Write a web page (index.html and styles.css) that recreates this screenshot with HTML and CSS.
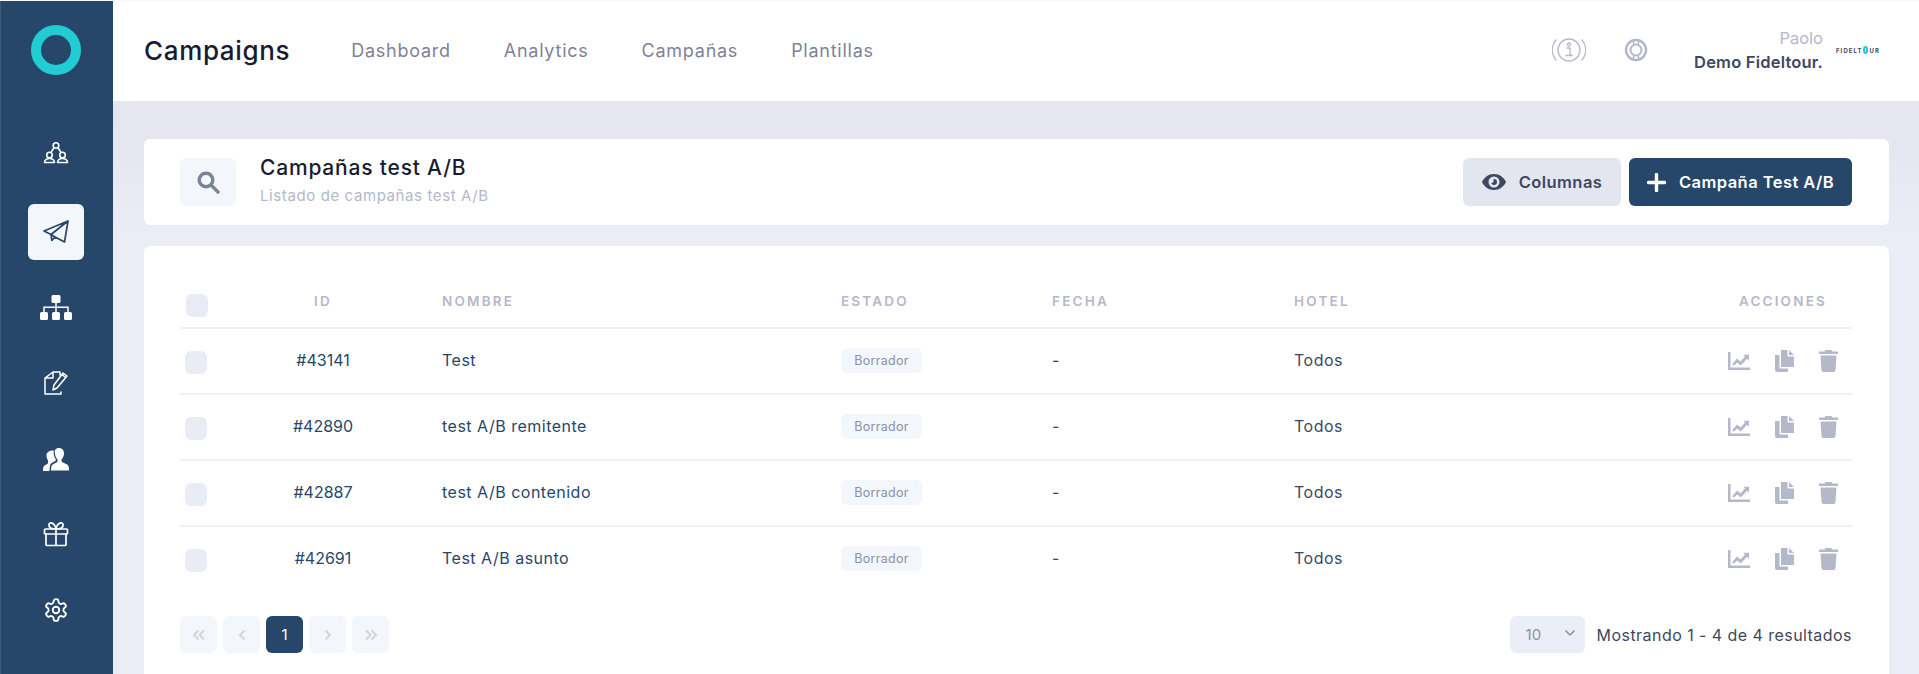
FILE: index.html
```html
<!DOCTYPE html>
<html lang="es">
<head>
<meta charset="utf-8">
<title>Campaigns</title>
<link rel="stylesheet" href="styles.css">
</head>
<body>
<div class="shell">
  <aside class="sidebar">
    <div class="logo"><svg width="50" height="50" viewBox="0 0 50 50"><circle cx="25" cy="25" r="20" fill="none" stroke="#22ccd3" stroke-width="10"/></svg></div>
    <nav class="side-nav">
      <a class="side-item first"><svg width="26" height="24" viewBox="0 0 26 24" fill="none" stroke="#fff" stroke-width="1.6" stroke-linecap="round" stroke-linejoin="round"><circle cx="13" cy="4.500" r="2.800"/><circle cx="6.500" cy="14" r="2.800"/><circle cx="19.500" cy="14" r="2.800"/><path d="M1.500 21.500c.3-2.700 2.300-4 5-4s4.700 1.300 5 4H1.500zM14.500 21.500c.3-2.700 2.300-4 5-4s4.700 1.300 5 4h-10zM8.500 10.500l2-3M17.500 10.500l-2-3"/></svg></a>
      <a class="side-item active"><svg width="26" height="26" viewBox="0 0 26 26" fill="none" stroke="#26476a" stroke-width="1.700" stroke-linejoin="round" stroke-linecap="round"><path d="M25 2 1 12l7 3.500L25 2l-3.500 21L12 18l-4-2.500.8 6 3.200-3.500"/></svg></a>
      <a class="side-item"><svg width="32" height="26" viewBox="0 0 32 26" fill="#fff"><rect x="11.500" y="0" width="9" height="8" rx="1.500"/><rect x="0" y="17" width="8" height="8" rx="1.500"/><rect x="12" y="17" width="8" height="8" rx="1.500"/><rect x="24" y="17" width="8" height="8" rx="1.500"/><path d="M15.250 8h1.500v3.500H28.750V17h-1.500v-4H16.750v4h-1.500v-4H4.750v4h-1.500v-5.500h12z"/></svg></a>
      <a class="side-item"><svg width="26" height="26" viewBox="0 0 26 26" fill="none" stroke="#fff" stroke-width="1.500" stroke-linejoin="round" stroke-linecap="round"><path d="M17 5V2h-7L2 8v16h16v-2M10 2v6H2M24 6l-10 12-4 2 1-5L20 3l4 3zM19 4.500l3.500 3"/></svg></a>
      <a class="side-item"><svg width="26" height="24" viewBox="0 0 26 24" fill="#fff"><path d="M16 1c3.200 0 5 2.300 5 5.500 0 2.500-1 4.500-2.400 5.800v2.200c0 1 4.400 1.800 6.400 3.700 .8.800 1 3.300 1 5.300H8c0-2 .2-4.500 1-5.300 2-1.900 5.500-2.700 5.500-3.700v-2.200C13 11 12 9 12 6.500 11 3.300 12.800 1 16 1z"/><path d="M8.500 3.600c1-.3 1.800-.2 2.400.1-.4 1-.4 2-.2 3 .2 2 1 4 2 5.300v1.800c-.8.800-3.300 1.500-5 3C7 18.600 6.500 21 6.500 24H0c0-2 .2-4 .8-4.700 1.400-1.500 4.200-2 4.200-3.300v-2.500C4 12 3.500 10 3.500 8 3.500 5.800 6 4 8.500 3.600z"/></svg></a>
      <a class="side-item"><svg width="26" height="26" viewBox="0 0 26 26" fill="none" stroke="#fff" stroke-width="1.700" stroke-linejoin="round" stroke-linecap="round"><rect x="1.500" y="8" width="23" height="5" rx="1"/><path d="M3 13v10.500a1 1 0 0 0 1 1h18a1 1 0 0 0 1-1V13M13 8v16.500M13 8C10 8 5.500 7.500 6 3.500 6.500 .8 11.500 1 13 8zM13 8c3 0 7.500-.5 7-4.500C19.500 .8 14.500 1 13 8z"/></svg></a>
      <a class="side-item"><svg width="26" height="26" viewBox="0 0 24 24" fill="none" stroke="#fff" stroke-width="1.700" stroke-linejoin="round" stroke-linecap="round"><path d="M12.220 2h-.44a2 2 0 0 0-2 2v.18a2 2 0 0 1-1 1.730l-.43.25a2 2 0 0 1-2 0l-.15-.08a2 2 0 0 0-2.730.73l-.22.380a2 2 0 0 0 .730 2.730l.15.100a2 2 0 0 1 1 1.720v.510a2 2 0 0 1-1 1.740l-.15.090a2 2 0 0 0-.730 2.730l.22.380a2 2 0 0 0 2.730.730l.15-.080a2 2 0 0 1 2 0l.43.250a2 2 0 0 1 1 1.730V20a2 2 0 0 0 2 2h.44a2 2 0 0 0 2-2v-.180a2 2 0 0 1 1-1.730l.43-.250a2 2 0 0 1 2 0l.15.080a2 2 0 0 0 2.730-.730l.22-.390a2 2 0 0 0-.730-2.730l-.15-.080a2 2 0 0 1-1-1.740v-.500a2 2 0 0 1 1-1.740l.15-.090a2 2 0 0 0 .730-2.730l-.22-.380a2 2 0 0 0-2.730-.730l-.15.080a2 2 0 0 1-2 0l-.43-.250a2 2 0 0 1-1-1.730V4a2 2 0 0 0-2-2z"/><circle cx="12" cy="12" r="3"/></svg></a>
    </nav>
  </aside>
  <div class="content">
    <header class="topbar">
      <h1 class="brand">Campaigns</h1>
      <nav class="top-nav">
        <a>Dashboard</a><a>Analytics</a><a>Campañas</a><a>Plantillas</a>
      </nav>
      <div class="top-right">
        <svg class="info-icon" width="34" height="26" viewBox="0 0 34 26" fill="none" stroke="#b5b8ca" stroke-width="1.300"><circle cx="17" cy="13" r="11"/><path d="M4.500 2.500a15 15 0 0 0 0 21M29.500 2.500a15 15 0 0 1 0 21"/><circle cx="17" cy="7.500" r="1.500"/><path d="M14.500 11h3.500v7h2M13.500 18.500h7"/></svg>
        <svg class="ring-icon" width="24" height="24" viewBox="0 0 24 24" fill="none" stroke="#b5b8ca"><circle cx="12" cy="12" r="10" stroke-width="2.500"/><circle cx="12" cy="12" r="5.500" stroke-width="2"/><path d="M9 2.500 10 7M15 2.500 14 7M9 21.500l1-4.500M15 21.500 14 17" stroke-width="1.500"/></svg>
        <div class="user"><span class="user-name">Paolo</span><span class="user-org">Demo Fideltour.</span></div>
        <div class="org-logo">FIDELT<i class="org-o"></i>UR</div>
      </div>
    </header>
    <main class="main">
      <section class="card head-card">
        <div class="search-box"><svg width="23" height="23" viewBox="0 0 23 23" fill="none" stroke="#7b8399" stroke-width="3.400"><circle cx="9" cy="9" r="6.800"/><path d="M14 14l7 7" stroke-linecap="round"/></svg></div>
        <div class="head-text">
          <h2 class="head-title">Campañas test A/B</h2>
          <p class="head-sub">Listado de campañas test A/B</p>
        </div>
        <div class="head-actions">
          <button class="btn btn-light"><svg width="24" height="16" viewBox="0 0 24 16"><path fill="#3f4760" fill-rule="evenodd" d="M12 0c5.500 0 9.800 3.500 12 8-2.200 4.500-6.500 8-12 8S2.200 12.500 0 8c2.200-4.500 6.500-8 12-8zm0 2.500a5.500 5.500 0 1 0 0 11 5.500 5.500 0 0 0 0-11zm0 2.500a3 3 0 1 1-2.900 3.800c.5.400 2.500.2 2.500-1.500 0-1-.4-1.800 .4-2.300z"/></svg>Columnas</button>
          <button class="btn btn-dark"><svg width="19" height="19" viewBox="0 0 19 19"><path d="M9.500 1.500v16M1.500 9.500h16" stroke="#fff" stroke-width="3.400" stroke-linecap="round"/></svg>Campaña Test A/B</button>
        </div>
      </section>
      <section class="card table-card">
        <div class="row head-row">
          <span class="check head-check"></span>
          <span class="cell-id">ID</span>
          <span class="cell-name">NOMBRE</span>
          <span>ESTADO</span>
          <span>FECHA</span>
          <span>HOTEL</span>
          <span class="cell-actions head-actions-label">ACCIONES</span>
        </div>
        <div class="row"><span class="check"></span><span class="cell-id">#43141</span><span class="cell-name">Test</span><span><b class="badge">Borrador</b></span><span>-</span><span>Todos</span><span class="cell-actions"><svg class="act" width="22" height="18" viewBox="0 0 22 18"><use href="#i-chart"/></svg><svg class="act" width="19" height="22" viewBox="0 0 19 22"><use href="#i-copy"/></svg><svg class="act" width="19" height="22" viewBox="0 0 19 22"><use href="#i-trash"/></svg></span></div>
        <div class="row"><span class="check"></span><span class="cell-id">#42890</span><span class="cell-name">test A/B remitente</span><span><b class="badge">Borrador</b></span><span>-</span><span>Todos</span><span class="cell-actions"><svg class="act" width="22" height="18" viewBox="0 0 22 18"><use href="#i-chart"/></svg><svg class="act" width="19" height="22" viewBox="0 0 19 22"><use href="#i-copy"/></svg><svg class="act" width="19" height="22" viewBox="0 0 19 22"><use href="#i-trash"/></svg></span></div>
        <div class="row"><span class="check"></span><span class="cell-id">#42887</span><span class="cell-name">test A/B contenido</span><span><b class="badge">Borrador</b></span><span>-</span><span>Todos</span><span class="cell-actions"><svg class="act" width="22" height="18" viewBox="0 0 22 18"><use href="#i-chart"/></svg><svg class="act" width="19" height="22" viewBox="0 0 19 22"><use href="#i-copy"/></svg><svg class="act" width="19" height="22" viewBox="0 0 19 22"><use href="#i-trash"/></svg></span></div>
        <div class="row last"><span class="check"></span><span class="cell-id">#42691</span><span class="cell-name">Test A/B asunto</span><span><b class="badge">Borrador</b></span><span>-</span><span>Todos</span><span class="cell-actions"><svg class="act" width="22" height="18" viewBox="0 0 22 18"><use href="#i-chart"/></svg><svg class="act" width="19" height="22" viewBox="0 0 19 22"><use href="#i-copy"/></svg><svg class="act" width="19" height="22" viewBox="0 0 19 22"><use href="#i-trash"/></svg></span></div>
        <div class="pager-row">
          <div class="pager">
            <a class="page"><svg width="14" height="12" viewBox="0 0 14 12"><use href="#i-dleft"/></svg></a>
            <a class="page"><svg width="10" height="12" viewBox="0 0 10 12"><path d="M7.500 1.500 3 6l4.500 4.500" fill="none" stroke="#d2d4e0" stroke-width="2"/></svg></a>
            <a class="page current">1</a>
            <a class="page"><svg width="10" height="12" viewBox="0 0 10 12"><path d="M2.500 1.500 7 6l-4.500 4.500" fill="none" stroke="#d2d4e0" stroke-width="2"/></svg></a>
            <a class="page"><svg class="flip" width="14" height="12" viewBox="0 0 14 12"><use href="#i-dleft"/></svg></a>
          </div>
          <div class="results">
            <div class="page-size"><span>10</span><svg width="12" height="8" viewBox="0 0 12 8"><path d="M1.500 1.500 6 6l4.500-4.500" fill="none" stroke="#8b90a6" stroke-width="1.500"/></svg></div>
            <span class="results-text">Mostrando 1 - 4 de 4 resultados</span>
          </div>
        </div>
      </section>
    </main>
  </div>
</div>
<svg class="defs" width="0" height="0">
  <defs>
    <g id="i-chart" fill="#b5b8c9"><path d="M0 0h2.500v15.500H22V18H0z"/><path d="M4 12.500 9 6.500l3.500 3L17 4.500l-1.800-1.800H21v6l-2-2-6.300 6.800-3.500-3L6 13.500z"/></g>
    <g id="i-copy" fill="#b5b8c9"><path d="M6 0h6.500v6.500H19V17H6z"/><path d="M14 0l5 5h-5zM0 5h4.500v13.500H13V22H2a2 2 0 0 1-2-2z"/></g>
    <g id="i-trash" fill="#b5b8c9"><path d="M6.500 0h6l1 1.500H19v2.500H0V1.500h5.500zM1.500 5.500h16L16.500 20a2 2 0 0 1-2 2h-10a2 2 0 0 1-2-2z"/></g>
    <path id="i-dleft" d="M6.500 1.500 2 6l4.500 4.500M12 1.500 7.500 6l4.500 4.500" fill="none" stroke="#d2d4e0" stroke-width="2"/>
  </defs>
</svg>
</body>
</html>
```
FILE: styles.css
```css
* { box-sizing: border-box; }
html, body { margin: 0; height: 100%; overflow: hidden; }
body { background: #f7f8fb; font-family: Inter, "Noto Sans", "Liberation Sans", sans-serif; color: #3f4760; }
.shell { display: flex; height: 673px; margin-top: 1px; }
.defs { display: block; }

.sidebar { width: 113px; flex: none; background: #26476a; box-shadow: inset 1px 0 0 #3d5a7a; padding-right: 1px; display: flex; flex-direction: column; align-items: center; }
.logo { height: 50px; margin-top: 24px; }
.logo svg { display: block; }
.side-nav { display: flex; flex-direction: column; gap: 19.600px; margin-top: 50px; }
.side-item { width: 56px; height: 56px; display: flex; align-items: center; justify-content: center; border-radius: 6px; }
.side-item.first { margin-bottom: 3.400px; }
.side-item.active { background: #f3f6fa; }

.content { flex: 1; min-width: 0; display: flex; flex-direction: column; background: linear-gradient(#e4e5ef, #e5e6f0 140px, #ebedf6 240px); }
.topbar { height: 100px; flex: none; background: #fff; display: flex; align-items: center; padding: 0 39px 2px 31px; }
.brand { margin: 0; font-size: 26px; font-weight: 500; color: #181c32; letter-spacing: 0.650px; }
.top-nav { display: flex; gap: 53px; margin-left: 61px; font-size: 18px; color: #7e8299; letter-spacing: 0.750px; }
.top-right { margin-left: auto; display: flex; align-items: center; }
.ring-icon { margin-left: 38px; }
.user { display: flex; flex-direction: column; align-items: flex-end; margin-left: 46px; }
.user-name { font-size: 16.500px; color: #b5b8ca; line-height: 24px; }
.user-org { font-size: 16.500px; font-weight: 600; color: #3f4760; line-height: 24px; letter-spacing: 0.200px; }
.org-logo { font-size: 6px; font-weight: 700; color: #3f4760; letter-spacing: 1.100px; margin-left: 13px; display: flex; align-items: center; width: 44px; }
.org-o { width: 8px; height: 8px; border: 2px solid #22ccd3; border-radius: 50%; display: block; margin-right: 1px; }

.main { flex: 1; min-height: 0; padding: 38px 30px 0 31px; display: flex; flex-direction: column; gap: 21px; }
.card { background: #fff; border-radius: 6px; }
.head-card { height: 86px; flex: none; padding: 0 37px 0 36px; display: flex; align-items: center; }
.search-box { width: 56px; height: 48px; background: #f3f6fa; border-radius: 6px; display: flex; align-items: center; justify-content: center; }
.head-text { margin-left: 24px; margin-top: -4px; }
.head-title { margin: 0; font-size: 21px; line-height: 28px; font-weight: 500; color: #181c32; letter-spacing: 0.800px; }
.head-sub { margin: 4px 0 0; font-size: 15px; line-height: 20px; color: #b5b8ca; letter-spacing: 0.600px; }
.head-actions { margin-left: auto; display: flex; gap: 8px; }
.btn { height: 48px; border: 0; border-radius: 6px; font: 600 16.500px Inter, sans-serif; letter-spacing: 0.450px; display: flex; align-items: center; justify-content: center; gap: 13px; }
.btn-light { width: 158px; background: #e4e6ef; color: #3f4760; }
.btn-dark { width: 223px; background: #26476a; color: #fff; }

.table-card { flex: 1; padding: 0 37px 0 36px; border-radius: 6px 6px 0 0; }
.row { display: grid; grid-template-columns: 72px 142px 447px 211px 242px 1fr 200px; height: 66px; padding-bottom: 2px; align-items: center; border-bottom: 2px solid #f0f0f8; font-size: 16px; color: #3f4760; letter-spacing: 0.500px; }
.row > .cell-id { text-align: center; color: #26476a; letter-spacing: 0; }
.cell-name { padding-left: 48px; color: #26476a; }
.row.last { border-bottom: 0; height: 64px; }
.head-row { height: 83px; padding-top: 28px; padding-bottom: 0; font-size: 13.500px; font-weight: 600; letter-spacing: 2.200px; color: #b5b8ca; }
.row.head-row > .cell-id, .head-row > .cell-name { color: #b5b8ca; letter-spacing: 2.200px; }
.check { width: 22px; height: 23px; margin-left: 5px; margin-top: 5px; border-radius: 6px; background: #e9ecf4; display: block; }
.head-check { margin-left: 6px; margin-top: 9px; }
.badge { display: inline-block; width: 81px; height: 25px; line-height: 25px; text-align: center; background: #f3f6fa; border-radius: 6px; font-size: 12.500px; font-weight: 400; color: #8b90a6; letter-spacing: 0.300px; }
.cell-actions { display: flex; justify-content: flex-end; align-items: center; gap: 25px; padding-right: 14px; margin-top: 2px; }
.head-row > .head-actions-label { padding-right: 25px; margin-top: 0; }

.pager-row { display: flex; justify-content: space-between; align-items: center; height: 37px; margin-top: 25px; }
.pager { display: flex; gap: 6px; }
.page { width: 37px; height: 37px; border-radius: 6px; background: #f3f6fa; display: flex; align-items: center; justify-content: center; font-size: 15px; }
.page.current { background: #26476a; color: #fff; }
.flip { transform: scaleX(-1); }
.results { display: flex; align-items: center; gap: 12px; }
.page-size { width: 75px; height: 37px; border-radius: 6px; background: #ebeef6; display: flex; align-items: center; justify-content: space-between; padding: 0 9px 0 16px; color: #8b90a6; font-size: 15px; }
.page-size svg { margin-bottom: 4px; }
.results-text { font-size: 16px; letter-spacing: 0.450px; color: #3f4760; }
```
